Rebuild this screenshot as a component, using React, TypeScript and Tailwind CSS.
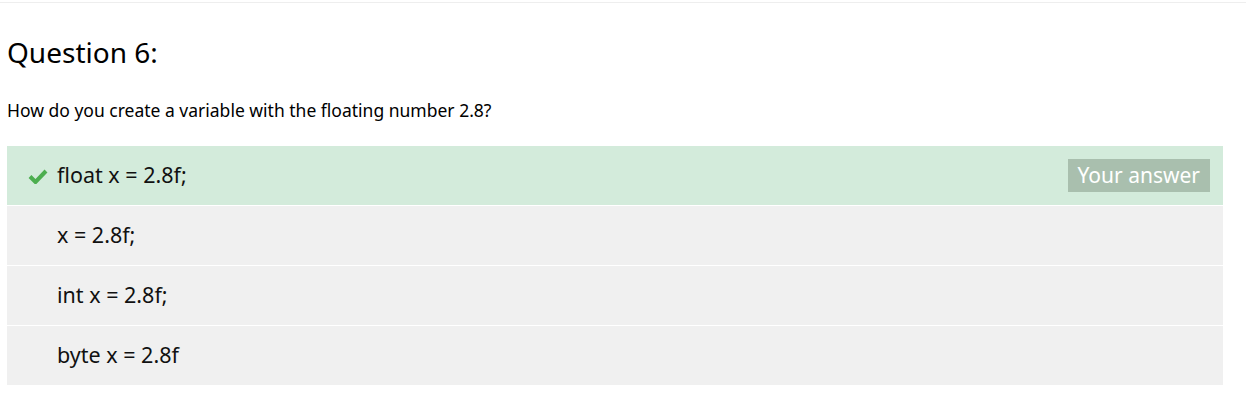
import React from 'react';

const answers = [
  { text: 'float x = 2.8f;', correct: true, mine: true },
  { text: 'x = 2.8f;' },
  { text: 'int x = 2.8f;' },
  { text: 'byte x = 2.8f' },
];

function Check() {
  return (
    <svg width="20" height="16" viewBox="0 0 20 16" className="shrink-0">
      <path d="M2 8.5 L7.5 14 L18 3" fill="none" stroke="#4cae4f" strokeWidth="4" strokeLinejoin="miter" strokeLinecap="butt" />
    </svg>
  );
}

export default function App() {
  return (
    <div className="min-h-[400px] bg-white text-black" style={{ fontFamily: '"Noto Sans", "Open Sans", sans-serif' }}>
      <div className="h-[2px]" />
      <div className="border-t border-[#eeeeee] px-[7px] pr-[23px]">
        <h2 className="mt-[29px] text-[28px] leading-[40px]">Question 6:</h2>
        <p className="mt-[26px] text-[17.5px] leading-[24px]">How do you create a variable with the floating number 2.8?</p>
        <div className="mt-[24px] flex flex-col gap-px">
          {answers.map((a) => (
            <div
              key={a.text}
              className={`flex h-[59px] items-center pr-[13px] ${a.correct ? 'bg-[#d3ebdb]' : 'bg-[#f0f0f0]'}`}
            >
              <div className="flex w-[50px] items-center justify-end pr-[9px]">{a.correct ? <Check /> : null}</div>
              <span className="text-[21.5px] text-[#111]">{a.text}</span>
              {a.mine ? (
                <span className="ml-auto bg-[#a9bfae] px-[10px] text-[21px] leading-[33px] text-white">Your answer</span>
              ) : null}
            </div>
          ))}
        </div>
      </div>
    </div>
  );
}
